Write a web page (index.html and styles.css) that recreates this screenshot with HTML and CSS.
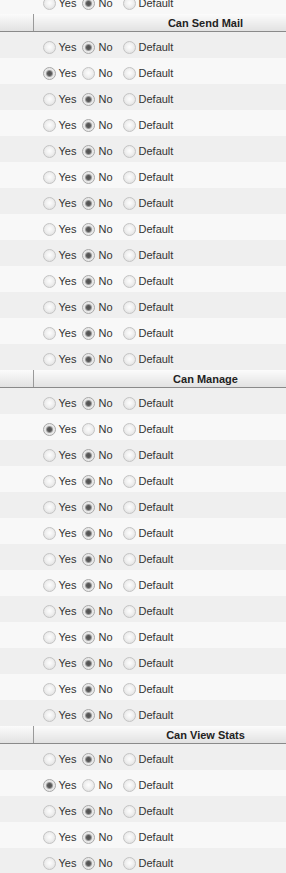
FILE: index.html
```html
<!DOCTYPE html>
<html lang="en">
<head>
    <meta charset="UTF-8">
    <meta name="viewport" content="width=device-width, initial-scale=1.0">
    <title>Permissions</title>
    <link rel="stylesheet" href="styles.css">
</head>
<body>
    <div class="wrap">
        <table class="perms">
            <tbody>
                <tr class="row last">
                    <td class="blank"></td>
                    <td><div class="choices">
                        <label class="choice"><input type="radio" name="p0" value="yes">Yes</label>
                        <label class="choice no"><input type="radio" name="p0" value="no" checked>No</label>
                        <label class="choice"><input type="radio" name="p0" value="default">Default</label>
                    </div></td>
                </tr>
            </tbody>

            <tbody>
                <tr class="head"><th class="corner"></th><th>Can Send Mail</th></tr>
                <tr class="row"><td class="blank"></td><td><div class="choices">
                    <label class="choice"><input type="radio" name="mail1" value="yes">Yes</label>
                    <label class="choice no"><input type="radio" name="mail1" value="no" checked>No</label>
                    <label class="choice"><input type="radio" name="mail1" value="default">Default</label>
                </div></td></tr>
                <tr class="row"><td class="blank"></td><td><div class="choices">
                    <label class="choice"><input type="radio" name="mail2" value="yes" checked>Yes</label>
                    <label class="choice no"><input type="radio" name="mail2" value="no">No</label>
                    <label class="choice"><input type="radio" name="mail2" value="default">Default</label>
                </div></td></tr>
                <tr class="row"><td class="blank"></td><td><div class="choices">
                    <label class="choice"><input type="radio" name="mail3" value="yes">Yes</label>
                    <label class="choice no"><input type="radio" name="mail3" value="no" checked>No</label>
                    <label class="choice"><input type="radio" name="mail3" value="default">Default</label>
                </div></td></tr>
                <tr class="row"><td class="blank"></td><td><div class="choices">
                    <label class="choice"><input type="radio" name="mail4" value="yes">Yes</label>
                    <label class="choice no"><input type="radio" name="mail4" value="no" checked>No</label>
                    <label class="choice"><input type="radio" name="mail4" value="default">Default</label>
                </div></td></tr>
                <tr class="row"><td class="blank"></td><td><div class="choices">
                    <label class="choice"><input type="radio" name="mail5" value="yes">Yes</label>
                    <label class="choice no"><input type="radio" name="mail5" value="no" checked>No</label>
                    <label class="choice"><input type="radio" name="mail5" value="default">Default</label>
                </div></td></tr>
                <tr class="row"><td class="blank"></td><td><div class="choices">
                    <label class="choice"><input type="radio" name="mail6" value="yes">Yes</label>
                    <label class="choice no"><input type="radio" name="mail6" value="no" checked>No</label>
                    <label class="choice"><input type="radio" name="mail6" value="default">Default</label>
                </div></td></tr>
                <tr class="row"><td class="blank"></td><td><div class="choices">
                    <label class="choice"><input type="radio" name="mail7" value="yes">Yes</label>
                    <label class="choice no"><input type="radio" name="mail7" value="no" checked>No</label>
                    <label class="choice"><input type="radio" name="mail7" value="default">Default</label>
                </div></td></tr>
                <tr class="row"><td class="blank"></td><td><div class="choices">
                    <label class="choice"><input type="radio" name="mail8" value="yes">Yes</label>
                    <label class="choice no"><input type="radio" name="mail8" value="no" checked>No</label>
                    <label class="choice"><input type="radio" name="mail8" value="default">Default</label>
                </div></td></tr>
                <tr class="row"><td class="blank"></td><td><div class="choices">
                    <label class="choice"><input type="radio" name="mail9" value="yes">Yes</label>
                    <label class="choice no"><input type="radio" name="mail9" value="no" checked>No</label>
                    <label class="choice"><input type="radio" name="mail9" value="default">Default</label>
                </div></td></tr>
                <tr class="row"><td class="blank"></td><td><div class="choices">
                    <label class="choice"><input type="radio" name="mail10" value="yes">Yes</label>
                    <label class="choice no"><input type="radio" name="mail10" value="no" checked>No</label>
                    <label class="choice"><input type="radio" name="mail10" value="default">Default</label>
                </div></td></tr>
                <tr class="row"><td class="blank"></td><td><div class="choices">
                    <label class="choice"><input type="radio" name="mail11" value="yes">Yes</label>
                    <label class="choice no"><input type="radio" name="mail11" value="no" checked>No</label>
                    <label class="choice"><input type="radio" name="mail11" value="default">Default</label>
                </div></td></tr>
                <tr class="row"><td class="blank"></td><td><div class="choices">
                    <label class="choice"><input type="radio" name="mail12" value="yes">Yes</label>
                    <label class="choice no"><input type="radio" name="mail12" value="no" checked>No</label>
                    <label class="choice"><input type="radio" name="mail12" value="default">Default</label>
                </div></td></tr>
                <tr class="row"><td class="blank"></td><td><div class="choices">
                    <label class="choice"><input type="radio" name="mail13" value="yes">Yes</label>
                    <label class="choice no"><input type="radio" name="mail13" value="no" checked>No</label>
                    <label class="choice"><input type="radio" name="mail13" value="default">Default</label>
                </div></td></tr>
            </tbody>

            <tbody>
                <tr class="head"><th class="corner"></th><th>Can Manage</th></tr>
                <tr class="row"><td class="blank"></td><td><div class="choices">
                    <label class="choice"><input type="radio" name="manage1" value="yes">Yes</label>
                    <label class="choice no"><input type="radio" name="manage1" value="no" checked>No</label>
                    <label class="choice"><input type="radio" name="manage1" value="default">Default</label>
                </div></td></tr>
                <tr class="row"><td class="blank"></td><td><div class="choices">
                    <label class="choice"><input type="radio" name="manage2" value="yes" checked>Yes</label>
                    <label class="choice no"><input type="radio" name="manage2" value="no">No</label>
                    <label class="choice"><input type="radio" name="manage2" value="default">Default</label>
                </div></td></tr>
                <tr class="row"><td class="blank"></td><td><div class="choices">
                    <label class="choice"><input type="radio" name="manage3" value="yes">Yes</label>
                    <label class="choice no"><input type="radio" name="manage3" value="no" checked>No</label>
                    <label class="choice"><input type="radio" name="manage3" value="default">Default</label>
                </div></td></tr>
                <tr class="row"><td class="blank"></td><td><div class="choices">
                    <label class="choice"><input type="radio" name="manage4" value="yes">Yes</label>
                    <label class="choice no"><input type="radio" name="manage4" value="no" checked>No</label>
                    <label class="choice"><input type="radio" name="manage4" value="default">Default</label>
                </div></td></tr>
                <tr class="row"><td class="blank"></td><td><div class="choices">
                    <label class="choice"><input type="radio" name="manage5" value="yes">Yes</label>
                    <label class="choice no"><input type="radio" name="manage5" value="no" checked>No</label>
                    <label class="choice"><input type="radio" name="manage5" value="default">Default</label>
                </div></td></tr>
                <tr class="row"><td class="blank"></td><td><div class="choices">
                    <label class="choice"><input type="radio" name="manage6" value="yes">Yes</label>
                    <label class="choice no"><input type="radio" name="manage6" value="no" checked>No</label>
                    <label class="choice"><input type="radio" name="manage6" value="default">Default</label>
                </div></td></tr>
                <tr class="row"><td class="blank"></td><td><div class="choices">
                    <label class="choice"><input type="radio" name="manage7" value="yes">Yes</label>
                    <label class="choice no"><input type="radio" name="manage7" value="no" checked>No</label>
                    <label class="choice"><input type="radio" name="manage7" value="default">Default</label>
                </div></td></tr>
                <tr class="row"><td class="blank"></td><td><div class="choices">
                    <label class="choice"><input type="radio" name="manage8" value="yes">Yes</label>
                    <label class="choice no"><input type="radio" name="manage8" value="no" checked>No</label>
                    <label class="choice"><input type="radio" name="manage8" value="default">Default</label>
                </div></td></tr>
                <tr class="row"><td class="blank"></td><td><div class="choices">
                    <label class="choice"><input type="radio" name="manage9" value="yes">Yes</label>
                    <label class="choice no"><input type="radio" name="manage9" value="no" checked>No</label>
                    <label class="choice"><input type="radio" name="manage9" value="default">Default</label>
                </div></td></tr>
                <tr class="row"><td class="blank"></td><td><div class="choices">
                    <label class="choice"><input type="radio" name="manage10" value="yes">Yes</label>
                    <label class="choice no"><input type="radio" name="manage10" value="no" checked>No</label>
                    <label class="choice"><input type="radio" name="manage10" value="default">Default</label>
                </div></td></tr>
                <tr class="row"><td class="blank"></td><td><div class="choices">
                    <label class="choice"><input type="radio" name="manage11" value="yes">Yes</label>
                    <label class="choice no"><input type="radio" name="manage11" value="no" checked>No</label>
                    <label class="choice"><input type="radio" name="manage11" value="default">Default</label>
                </div></td></tr>
                <tr class="row"><td class="blank"></td><td><div class="choices">
                    <label class="choice"><input type="radio" name="manage12" value="yes">Yes</label>
                    <label class="choice no"><input type="radio" name="manage12" value="no" checked>No</label>
                    <label class="choice"><input type="radio" name="manage12" value="default">Default</label>
                </div></td></tr>
                <tr class="row"><td class="blank"></td><td><div class="choices">
                    <label class="choice"><input type="radio" name="manage13" value="yes">Yes</label>
                    <label class="choice no"><input type="radio" name="manage13" value="no" checked>No</label>
                    <label class="choice"><input type="radio" name="manage13" value="default">Default</label>
                </div></td></tr>
            </tbody>

            <tbody>
                <tr class="head"><th class="corner"></th><th>Can View Stats</th></tr>
                <tr class="row"><td class="blank"></td><td><div class="choices">
                    <label class="choice"><input type="radio" name="stats1" value="yes">Yes</label>
                    <label class="choice no"><input type="radio" name="stats1" value="no" checked>No</label>
                    <label class="choice"><input type="radio" name="stats1" value="default">Default</label>
                </div></td></tr>
                <tr class="row"><td class="blank"></td><td><div class="choices">
                    <label class="choice"><input type="radio" name="stats2" value="yes" checked>Yes</label>
                    <label class="choice no"><input type="radio" name="stats2" value="no">No</label>
                    <label class="choice"><input type="radio" name="stats2" value="default">Default</label>
                </div></td></tr>
                <tr class="row"><td class="blank"></td><td><div class="choices">
                    <label class="choice"><input type="radio" name="stats3" value="yes">Yes</label>
                    <label class="choice no"><input type="radio" name="stats3" value="no" checked>No</label>
                    <label class="choice"><input type="radio" name="stats3" value="default">Default</label>
                </div></td></tr>
                <tr class="row"><td class="blank"></td><td><div class="choices">
                    <label class="choice"><input type="radio" name="stats4" value="yes">Yes</label>
                    <label class="choice no"><input type="radio" name="stats4" value="no" checked>No</label>
                    <label class="choice"><input type="radio" name="stats4" value="default">Default</label>
                </div></td></tr>
                <tr class="row"><td class="blank"></td><td><div class="choices">
                    <label class="choice"><input type="radio" name="stats5" value="yes">Yes</label>
                    <label class="choice no"><input type="radio" name="stats5" value="no" checked>No</label>
                    <label class="choice"><input type="radio" name="stats5" value="default">Default</label>
                </div></td></tr>
            </tbody>
        </table>
    </div>
</body>
</html>
```

FILE: styles.css
```css
body {
    font-family: "Liberation Sans", Arial, sans-serif;
    font-size: 11px;
    color: #333;
    background-color: #fff;
    margin: 0;
    padding: 0;
}
.wrap {
    width: 286px;
    height: 873px;
    overflow: hidden;
}
.perms {
    width: 377px;
    border-collapse: collapse;
    margin-top: -12px;
}
.perms td,
.perms th {
    padding: 0;
}
.head th {
    height: 17px;
    background: linear-gradient(#fbfbfb, #e2e2e2);
    border-bottom: 1px solid #8a8a8a;
    font-size: 11px;
    font-weight: bold;
    color: #222;
    text-align: center;
}
.head .corner {
    width: 33px;
    border-right: 1px solid #9a9a9a;
}
.row td {
    height: 26px;
    background-color: #f8f8f8;
}
.row:nth-child(even) td {
    background-color: #efefef;
}
.row.last td {
    background-color: #f8f8f8;
}
.blank {
    width: 33px;
}
.choices {
    display: flex;
    align-items: center;
    padding-left: 9px;
    padding-top: 4px;
}
.choice {
    display: flex;
    align-items: center;
    margin-right: 6px;
}
.choice.no {
    margin-right: 10px;
}
.choice input {
    appearance: none;
    -webkit-appearance: none;
    width: 13px;
    height: 13px;
    margin: 0 3px 0 0;
    border: 1px solid #c4c4c4;
    border-radius: 50%;
    background: radial-gradient(circle at 50% 45%, #fdfdfd 0, #f0f0f0 45%, #d8d8d8 100%);
    box-sizing: border-box;
}
.choice input:checked {
    border-color: #a8a8a8;
    background: radial-gradient(circle, #505050 0, #5a5a5a 2px, #9a9a9a 3px, #e6e6e6 4px, #f2f2f2 100%);
}
```
